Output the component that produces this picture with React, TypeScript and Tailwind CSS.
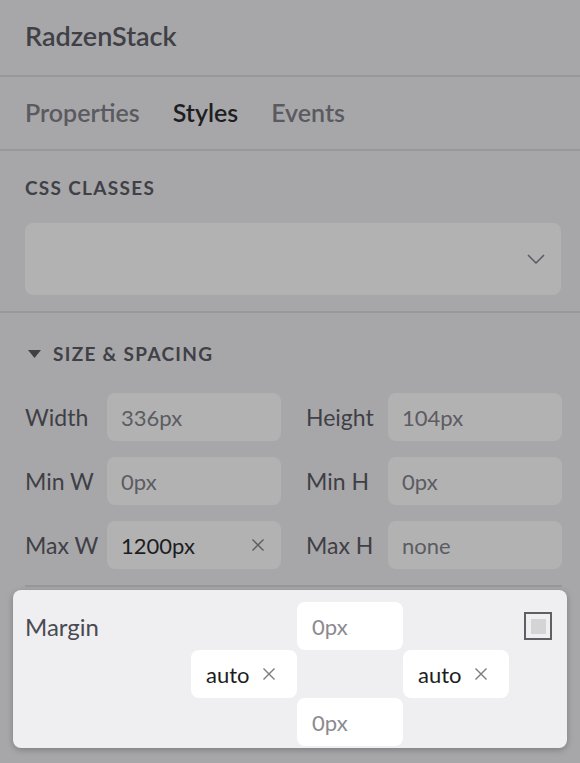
import React from "react";

const font = { fontFamily: "Lato, 'Noto Sans', sans-serif" };

function XIcon({ className = "" }: { className?: string }) {
  return (
    <svg width="14" height="14" viewBox="0 0 14 14" className={className}>
      <path d="M1.5 1.5 L12.5 12.5 M12.5 1.5 L1.5 12.5" stroke="currentColor" strokeWidth="1.4" fill="none" />
    </svg>
  );
}

function Field({ label, value, dark = false, clear = false }: { label: string; value: string; dark?: boolean; clear?: boolean }) {
  return (
    <div className="flex items-center">
      <div className="w-[82px] shrink-0 text-[23px] text-[#3f3f46]">{label}</div>
      <div className="flex h-[48px] flex-1 items-center justify-between rounded-[8px] bg-[#b2b2b3] pl-[14px] pr-[16px]">
        <span className={`text-[22px] ${dark ? "text-[#1d1d21]" : "text-[#5c5c62]"}`}>{value}</span>
        {clear && <XIcon className="text-[#5c5c62]" />}
      </div>
    </div>
  );
}

function MInput({ value, dark = false, clear = false }: { value: string; dark?: boolean; clear?: boolean }) {
  return (
    <div className="flex h-[48px] w-[106px] items-center gap-[12px] rounded-[8px] bg-white pl-[15px]">
      <span className={`text-[22px] ${dark ? "text-[#1d1d21]" : "text-[#8a8a90]"}`}>{value}</span>
      {clear && <XIcon className="text-[#7a7a80]" />}
    </div>
  );
}

export default function App() {
  return (
    <div className="h-[763px] w-[580px] overflow-hidden bg-[#a7a7a9]" style={font}>
      <div className="flex h-[77px] items-center border-b-2 border-[#98989b] px-[25px] pb-[3px]">
        <span className="text-[27px] font-semibold text-[#404047]">RadzenStack</span>
      </div>
      <div className="flex h-[74px] items-center gap-[33px] border-b-2 border-[#98989b] px-[25px]">
        <span className="text-[25px] font-semibold text-[#5a5a60]">Properties</span>
        <span className="text-[25px] font-semibold text-[#1e1e22]">Styles</span>
        <span className="text-[25px] font-semibold text-[#5a5a60]">Events</span>
      </div>
      <div className="border-b-2 border-[#98989b] pb-[16px] pl-[25px] pr-[19px] pt-[23px]">
        <div className="text-[19px] font-bold uppercase tracking-[1.3px] text-[#404047]">CSS Classes</div>
        <div className="mt-[20px] flex h-[72px] items-center justify-end rounded-[8px] bg-[#b2b2b3] pr-[16px]">
          <svg width="18" height="10" viewBox="0 0 18 10">
            <path d="M1 1 L9 9 L17 1" stroke="#5a5a60" strokeWidth="1.5" fill="none" />
          </svg>
        </div>
      </div>
      <div className="pl-[25px] pr-[18px] pt-[27px]">
        <div className="flex items-center gap-[12px] pl-[3px]">
          <svg width="13" height="8" viewBox="0 0 13 8">
            <path d="M0 0 L13 0 L6.5 8 Z" fill="#404047" />
          </svg>
          <span className="text-[19px] font-bold uppercase tracking-[1.3px] text-[#404047]">Size &amp; Spacing</span>
        </div>
        <div className="mt-[25px] grid grid-cols-2 gap-x-[25px] gap-y-[16px]">
          <Field label="Width" value="336px" />
          <Field label="Height" value="104px" />
          <Field label="Min W" value="0px" />
          <Field label="Min H" value="0px" />
          <Field label="Max W" value="1200px" dark clear />
          <Field label="Max H" value="none" />
        </div>
        <div className="mt-[16px] h-[2px] bg-[#98989b]" />
      </div>
      <div className="mx-[13px] mt-[3px] flex h-[158px] rounded-[8px] bg-[#efeff1] pl-[12px] pr-[15px] pt-[12px] shadow-[0_2px_6px_rgba(0,0,0,0.25)]">
        <div className="w-[166px] pt-[7px] text-[24px] text-[#4a4a52]">Margin</div>
        <div className="grid grid-cols-[106px_106px_106px] grid-rows-[48px_48px_48px]">
          <div />
          <MInput value="0px" />
          <div />
          <MInput value="auto" dark clear />
          <div />
          <MInput value="auto" dark clear />
          <div />
          <MInput value="0px" />
          <div />
        </div>
        <div className="ml-auto mt-[10px]">
          <div className="flex h-[28px] w-[28px] items-center justify-center border-2 border-[#5f5f66]">
            <div className="h-[15px] w-[15px] bg-[#d4d4d7]" />
          </div>
        </div>
      </div>
    </div>
  );
}
